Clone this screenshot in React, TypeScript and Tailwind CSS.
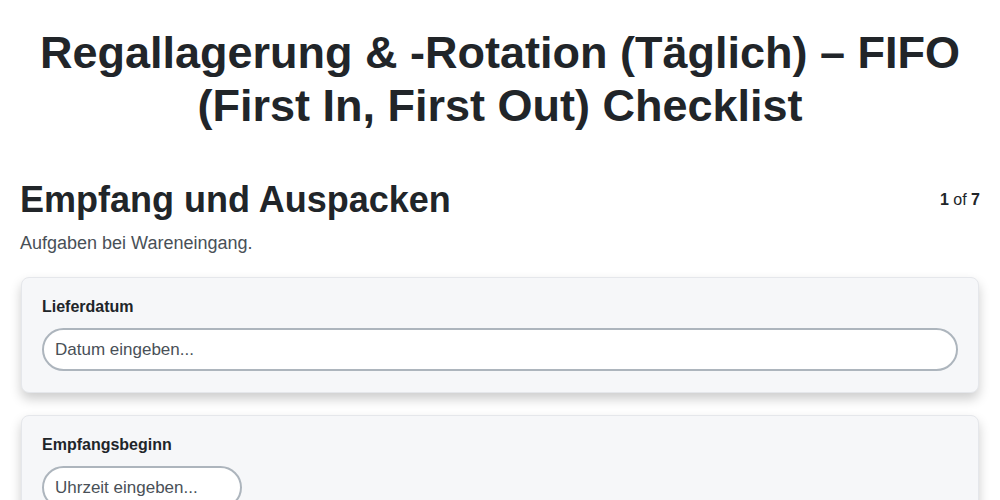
import React from 'react';

interface Field {
  label: string;
  placeholder: string;
  width: string;
}

const fields: Field[] = [
  { label: 'Lieferdatum', placeholder: 'Datum eingeben...', width: 'w-full' },
  { label: 'Empfangsbeginn', placeholder: 'Uhrzeit eingeben...', width: 'w-[200px]' },
];

export default function App() {
  return (
    <div className="min-h-screen bg-white font-['Liberation_Sans',Arial,sans-serif] text-[#212529]">
      <h1 className="pt-[26px] px-6 text-center text-[45px] font-bold leading-[53px]">
        Regallagerung &amp; -Rotation (Täglich) – FIFO (First In, First Out) Checklist
      </h1>

      <div className="px-5 mt-[46px]">
        <div className="flex items-start justify-between">
          <h2 className="text-[36px] font-bold leading-[44px]">Empfang und Auspacken</h2>
          <div className="pt-[10px] text-[16px]">
            <span className="font-bold">1</span> of <span className="font-bold">7</span>
          </div>
        </div>
        <p className="mt-[9px] text-[18px] leading-6 text-[#495057]">Aufgaben bei Wareneingang.</p>

        <div className="mt-[22px] flex flex-col gap-[22px]">
          {fields.map(f => (
            <div
              key={f.label}
              className="mx-px rounded-lg border border-[#e5e7eb] bg-[#f6f7f9] px-5 pt-[17px] pb-[21px] shadow-[0_6px_12px_rgba(0,0,0,0.2)]"
            >
              <label className="block text-[16px] font-bold leading-6">{f.label}</label>
              <input
                type="text"
                placeholder={f.placeholder}
                className={`${f.width} mt-[9px] h-[43px] rounded-full border-2 border-[#adb5bd] bg-white px-[11px] text-[17px] text-[#212529] placeholder:text-[#495057] outline-none`}
              />
            </div>
          ))}
        </div>
      </div>
    </div>
  );
}
